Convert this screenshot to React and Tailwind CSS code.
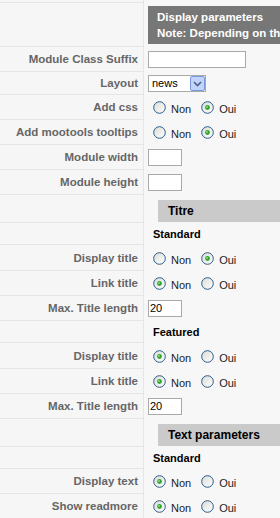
import React from 'react';

const font = { fontFamily: '"Liberation Sans", Arial, sans-serif' };

const Radio = ({ checked }) => (
  <svg width="13" height="13" viewBox="0 0 13 13" className="shrink-0">
    <defs>
      <linearGradient id="rg" x1="0" y1="0" x2="1" y2="1">
        <stop offset="0" stopColor="#dcdcd5" />
        <stop offset="1" stopColor="#ffffff" />
      </linearGradient>
    </defs>
    <circle cx="6.5" cy="6.5" r="5.8" fill="url(#rg)" stroke="#2a5a8c" strokeWidth="1" />
    {checked && (
      <>
        <circle cx="6.5" cy="6.5" r="2.4" fill="#2fa52f" />
        <circle cx="6" cy="6" r="0.9" fill="#8fe08f" />
      </>
    )}
  </svg>
);

const RadioPair = ({ value }) => (
  <div className="flex items-center pl-[9px]">
    <Radio checked={value === 'non'} />
    <span className="pl-[5px] pt-[4px] text-[11px] text-[#222]">Non</span>
    <span className="w-[10px]" />
    <Radio checked={value === 'oui'} />
    <span className="pl-[5px] pt-[4px] text-[11px] text-[#222]">Oui</span>
  </div>
);

const TextBox = ({ w, value }) => (
  <div className={`${w} h-[17px] ml-[4px] bg-white border border-[#a9a9a9] text-[11px] text-black leading-[15px] pl-[1px]`}>
    {value}
  </div>
);

const Row = ({ h, label, children }) => (
  <div className={`flex ${h}`}>
    <div className="w-[144px] shrink-0 bg-[#f6f6f6] border-b border-r border-[#e6e6e6] flex items-center justify-end pr-[5px] pt-[2px] text-[11.5px] font-bold text-[#666] whitespace-nowrap">
      {label}
    </div>
    <div className="flex-1 flex items-center min-w-0">{children}</div>
  </div>
);

const Section = ({ title }) => (
  <Row h="h-[28px]">
    <div className="ml-[14px] mt-[4px] flex-1 h-[22px] bg-[#cacaca] flex items-center pl-[10px] text-[12px] font-bold text-black whitespace-nowrap">
      {title}
    </div>
  </Row>
);

const Sub = ({ title }) => (
  <Row h="h-[22px]">
    <span className="pl-[9px] text-[11px] font-bold text-black">{title}</span>
  </Row>
);

export default function App() {
  return (
    <div className="w-[280px] h-[518px] overflow-hidden bg-[#f7f7f7]" style={font}>
      <Row h="h-[3px]" />
      <Row h="h-[44px]">
        <div className="ml-[4px] flex-1 h-[38px] bg-[#777777] text-white text-[11.5px] font-bold leading-[16px] pl-[9px] pt-[3px] whitespace-nowrap overflow-hidden">
          <div>Display parameters</div>
          <div>Note: Depending on the</div>
        </div>
      </Row>
      <Row h="h-[25px]" label="Module Class Suffix">
        <TextBox w="w-[98px]" />
      </Row>
      <Row h="h-[23px]" label="Layout">
        <div className="ml-[4px] w-[58px] h-[17px] bg-white border border-[#a9a9a9] flex items-center">
          <span className="flex-1 pl-[3px] text-[11px] text-black">news</span>
          <div className="w-[15px] h-[15px] bg-[#c1d3fb] border border-[#7a9ae0] rounded-[2px] flex items-center justify-center">
            <svg width="9" height="6" viewBox="0 0 9 6">
              <path d="M1 1 L4.5 4.5 L8 1" fill="none" stroke="#4d6185" strokeWidth="1.6" />
            </svg>
          </div>
        </div>
      </Row>
      <Row h="h-[25px]" label="Add css"><RadioPair value="oui" /></Row>
      <Row h="h-[25px]" label="Add mootools tooltips"><RadioPair value="oui" /></Row>
      <Row h="h-[25px]" label="Module width"><TextBox w="w-[34px]" /></Row>
      <Row h="h-[25px]" label="Module height"><TextBox w="w-[34px]" /></Row>
      <Section title="Titre" />
      <Sub title="Standard" />
      <Row h="h-[26px]" label="Display title"><RadioPair value="oui" /></Row>
      <Row h="h-[25px]" label="Link title"><RadioPair value="non" /></Row>
      <Row h="h-[25px]" label="Max. Title length"><TextBox w="w-[34px]" value="20" /></Row>
      <Sub title="Featured" />
      <Row h="h-[26px]" label="Display title"><RadioPair value="non" /></Row>
      <Row h="h-[25px]" label="Link title"><RadioPair value="non" /></Row>
      <Row h="h-[25px]" label="Max. Title length"><TextBox w="w-[34px]" value="20" /></Row>
      <Section title="Text parameters" />
      <Sub title="Standard" />
      <Row h="h-[25px]" label="Display text"><RadioPair value="non" /></Row>
      <Row h="h-[25px]" label="Show readmore"><RadioPair value="non" /></Row>
    </div>
  );
}
